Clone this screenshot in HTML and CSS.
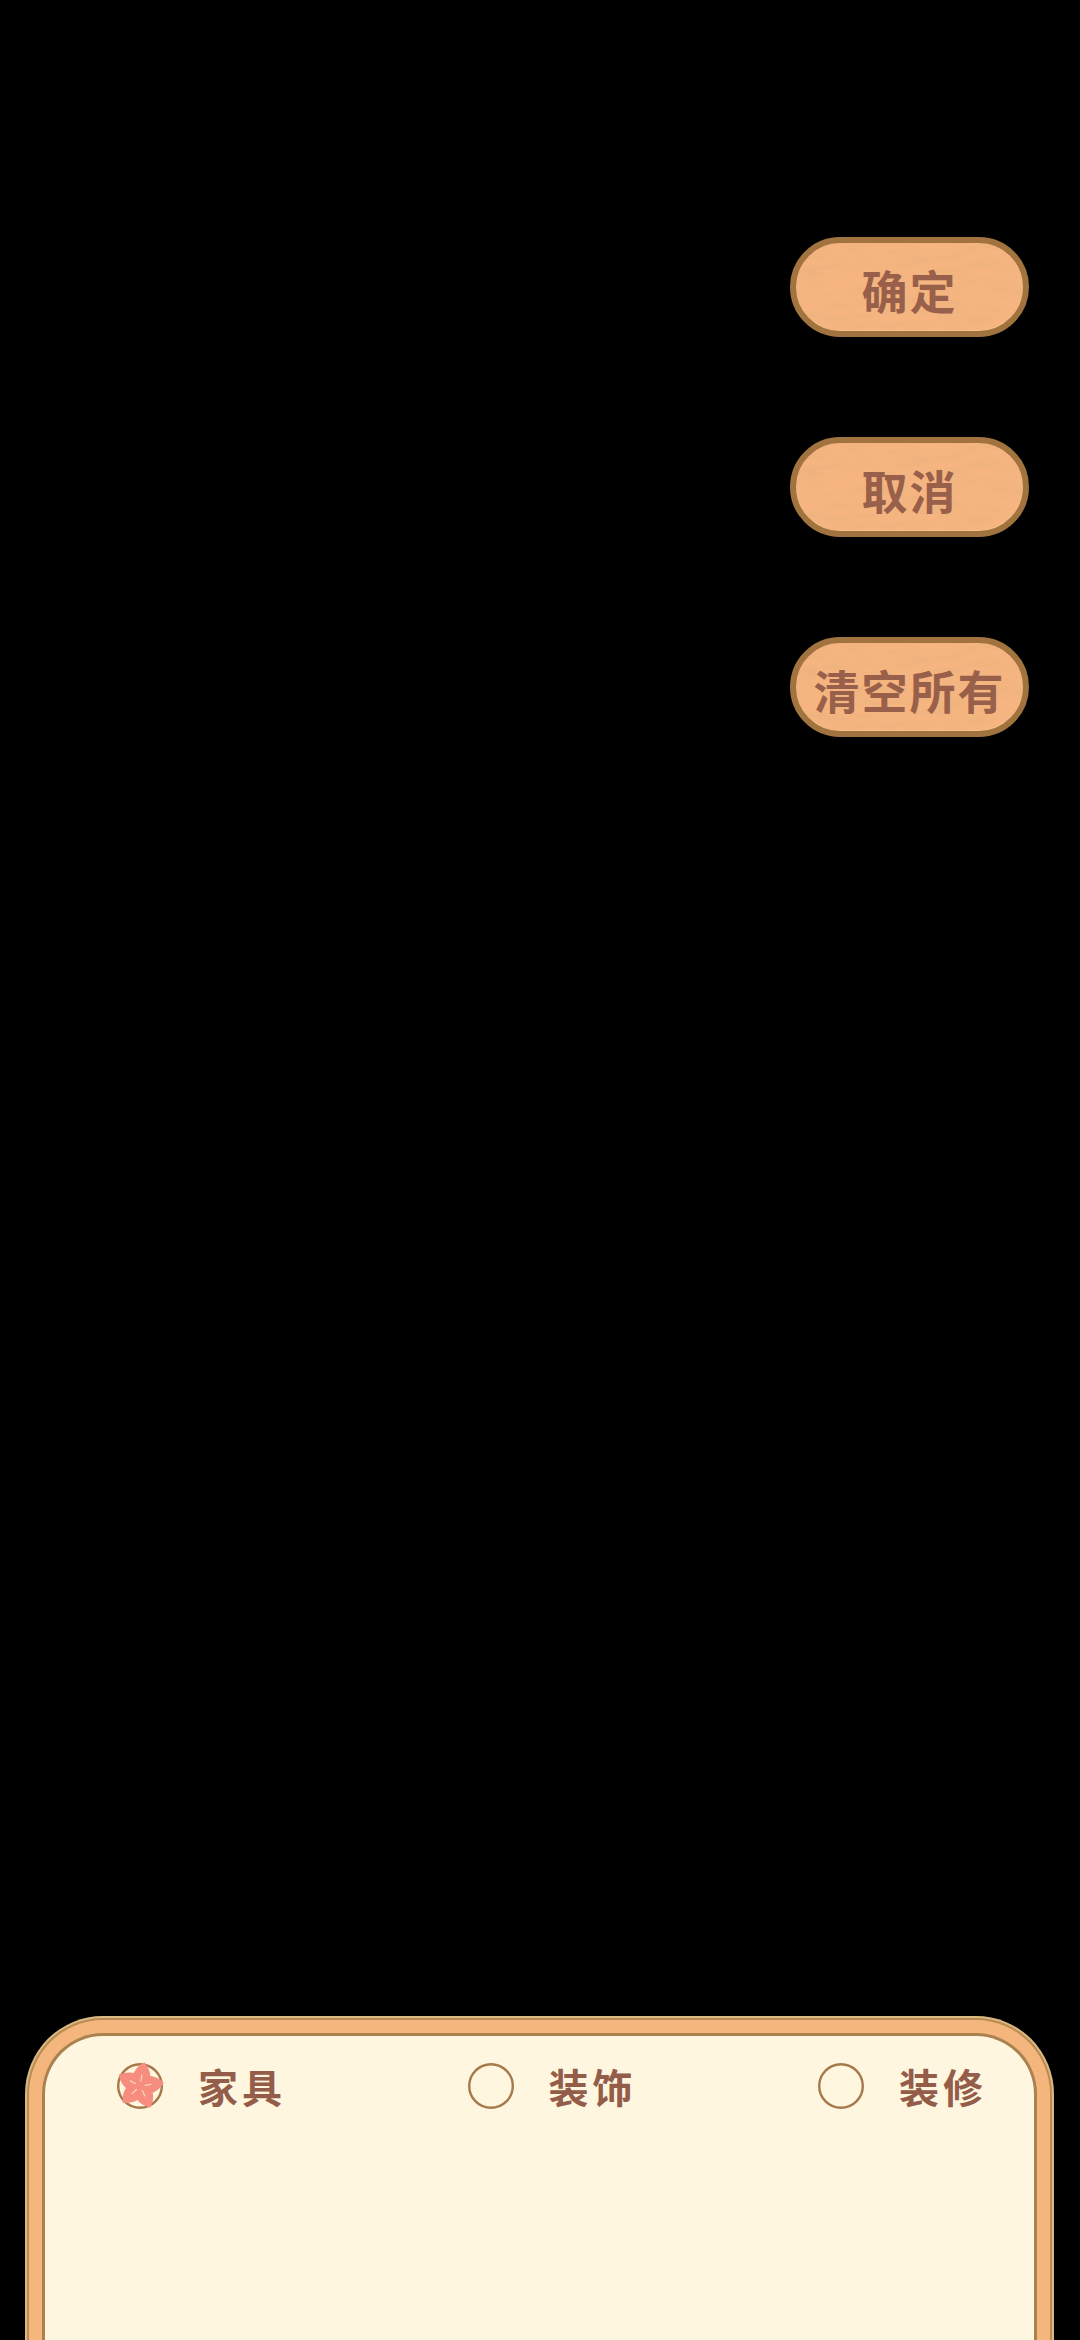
FILE: index.html
```html
<!DOCTYPE html>
<html lang="zh-CN">
<head>
    <meta charset="UTF-8">
    <meta name="viewport" content="width=device-width, initial-scale=1.0">
    <title>家具</title>
    <link rel="stylesheet" href="styles.css">
</head>
<body>
    <div class="actions">
        <button class="action-btn">确定</button>
        <button class="action-btn">取消</button>
        <button class="action-btn">清空所有</button>
    </div>
    <div class="panel">
        <div class="panel-band">
            <div class="panel-inner">
                <div class="tabs">
                    <div class="tab">
                        <svg class="tab-icon" viewBox="0 0 46 46">
                            <circle cx="23" cy="23" r="21.8" fill="none" stroke="#a5794a" stroke-width="2.4"/>
                            <g fill="#f78d7e" transform="rotate(10 23 23)">
                                <path id="petal" d="M23 25C10 20 13 7 23 -1C33 7 36 20 23 25Z"/>
                                <use href="#petal" transform="rotate(72 23 23)"/>
                                <use href="#petal" transform="rotate(144 23 23)"/>
                                <use href="#petal" transform="rotate(216 23 23)"/>
                                <use href="#petal" transform="rotate(288 23 23)"/>
                            </g>
                            <g stroke="#fbd3bc" stroke-width="1.3" stroke-linecap="round" transform="rotate(10 23 23)">
                                <path id="dash" d="M23 18L23 12"/>
                                <use href="#dash" transform="rotate(72 23 23)"/>
                                <use href="#dash" transform="rotate(144 23 23)"/>
                                <use href="#dash" transform="rotate(216 23 23)"/>
                                <use href="#dash" transform="rotate(288 23 23)"/>
                            </g>
                        </svg>
                        <span class="tab-label">家具</span>
                    </div>
                    <div class="tab">
                        <svg class="tab-icon" viewBox="0 0 46 46">
                            <circle cx="23" cy="23" r="21.8" fill="none" stroke="#a5794a" stroke-width="2.4"/>
                        </svg>
                        <span class="tab-label">装饰</span>
                    </div>
                    <div class="tab">
                        <svg class="tab-icon" viewBox="0 0 46 46">
                            <circle cx="23" cy="23" r="21.8" fill="none" stroke="#a5794a" stroke-width="2.4"/>
                        </svg>
                        <span class="tab-label">装修</span>
                    </div>
                </div>
            </div>
        </div>
    </div>
</body>
</html>
```
FILE: styles.css
```css
html, body {
    margin: 0;
    height: 100%;
}
body {
    width: 1080px;
    height: 2340px;
    background-color: #000000;
    display: flex;
    flex-direction: column;
    overflow: hidden;
    font-family: "Noto Sans CJK SC", "Noto Sans", sans-serif;
}
.actions {
    display: flex;
    flex-direction: column;
    align-items: flex-end;
    gap: 100px;
    padding: 237px 51px 0 0;
}
.action-btn {
    width: 239px;
    height: 100px;
    box-sizing: border-box;
    padding: 4px 0 0;
    background-color: #f6b580;
    background-image: url("data:image/svg+xml,%3Csvg xmlns='http://www.w3.org/2000/svg' width='240' height='100'%3E%3Cfilter id='n'%3E%3CfeTurbulence type='fractalNoise' baseFrequency='.03 .14' numOctaves='3'/%3E%3CfeColorMatrix values='0 0 0 0 .72 0 0 0 0 .42 0 0 0 0 .2 .7 0 0 0 -.28'/%3E%3C/filter%3E%3Crect width='240' height='100' filter='url(%23n)'/%3E%3C/svg%3E");
    border: 6px solid #a0733f;
    border-radius: 50px;
    box-shadow: inset 0 -1px 0 #f8c08a;
    color: #98604a;
    font-family: inherit;
    font-size: 46px;
    font-weight: 700;
    letter-spacing: 2px;
}
.panel {
    margin: auto 0 0 25px;
    width: 1029px;
    height: 324px;
    box-sizing: border-box;
    display: flex;
    background-color: #dcb981;
    padding: 2px 2px 0;
    border-radius: 78px 78px 0 0;
}
.panel-band {
    flex: 1;
    display: flex;
    background-color: #f4b67c;
    border: solid #b98c55;
    border-width: 2px 2px 0;
    border-radius: 76px 76px 0 0;
    padding: 13px 13px 0;
}
.panel-inner {
    flex: 1;
    background-color: #fff6e0;
    border: solid #a9824f;
    border-width: 3px 3px 0;
    border-radius: 61px 61px 0 0;
}
.tabs {
    display: flex;
    justify-content: space-between;
    padding: 27px 47px 0 72px;
}
.tab {
    display: flex;
    align-items: center;
    height: 46px;
    gap: 35px;
}
.tab-icon {
    width: 46px;
    height: 46px;
    overflow: visible;
}
.tab-label {
    color: #935d4a;
    font-size: 40px;
    font-weight: 700;
    letter-spacing: 4px;
}
```
